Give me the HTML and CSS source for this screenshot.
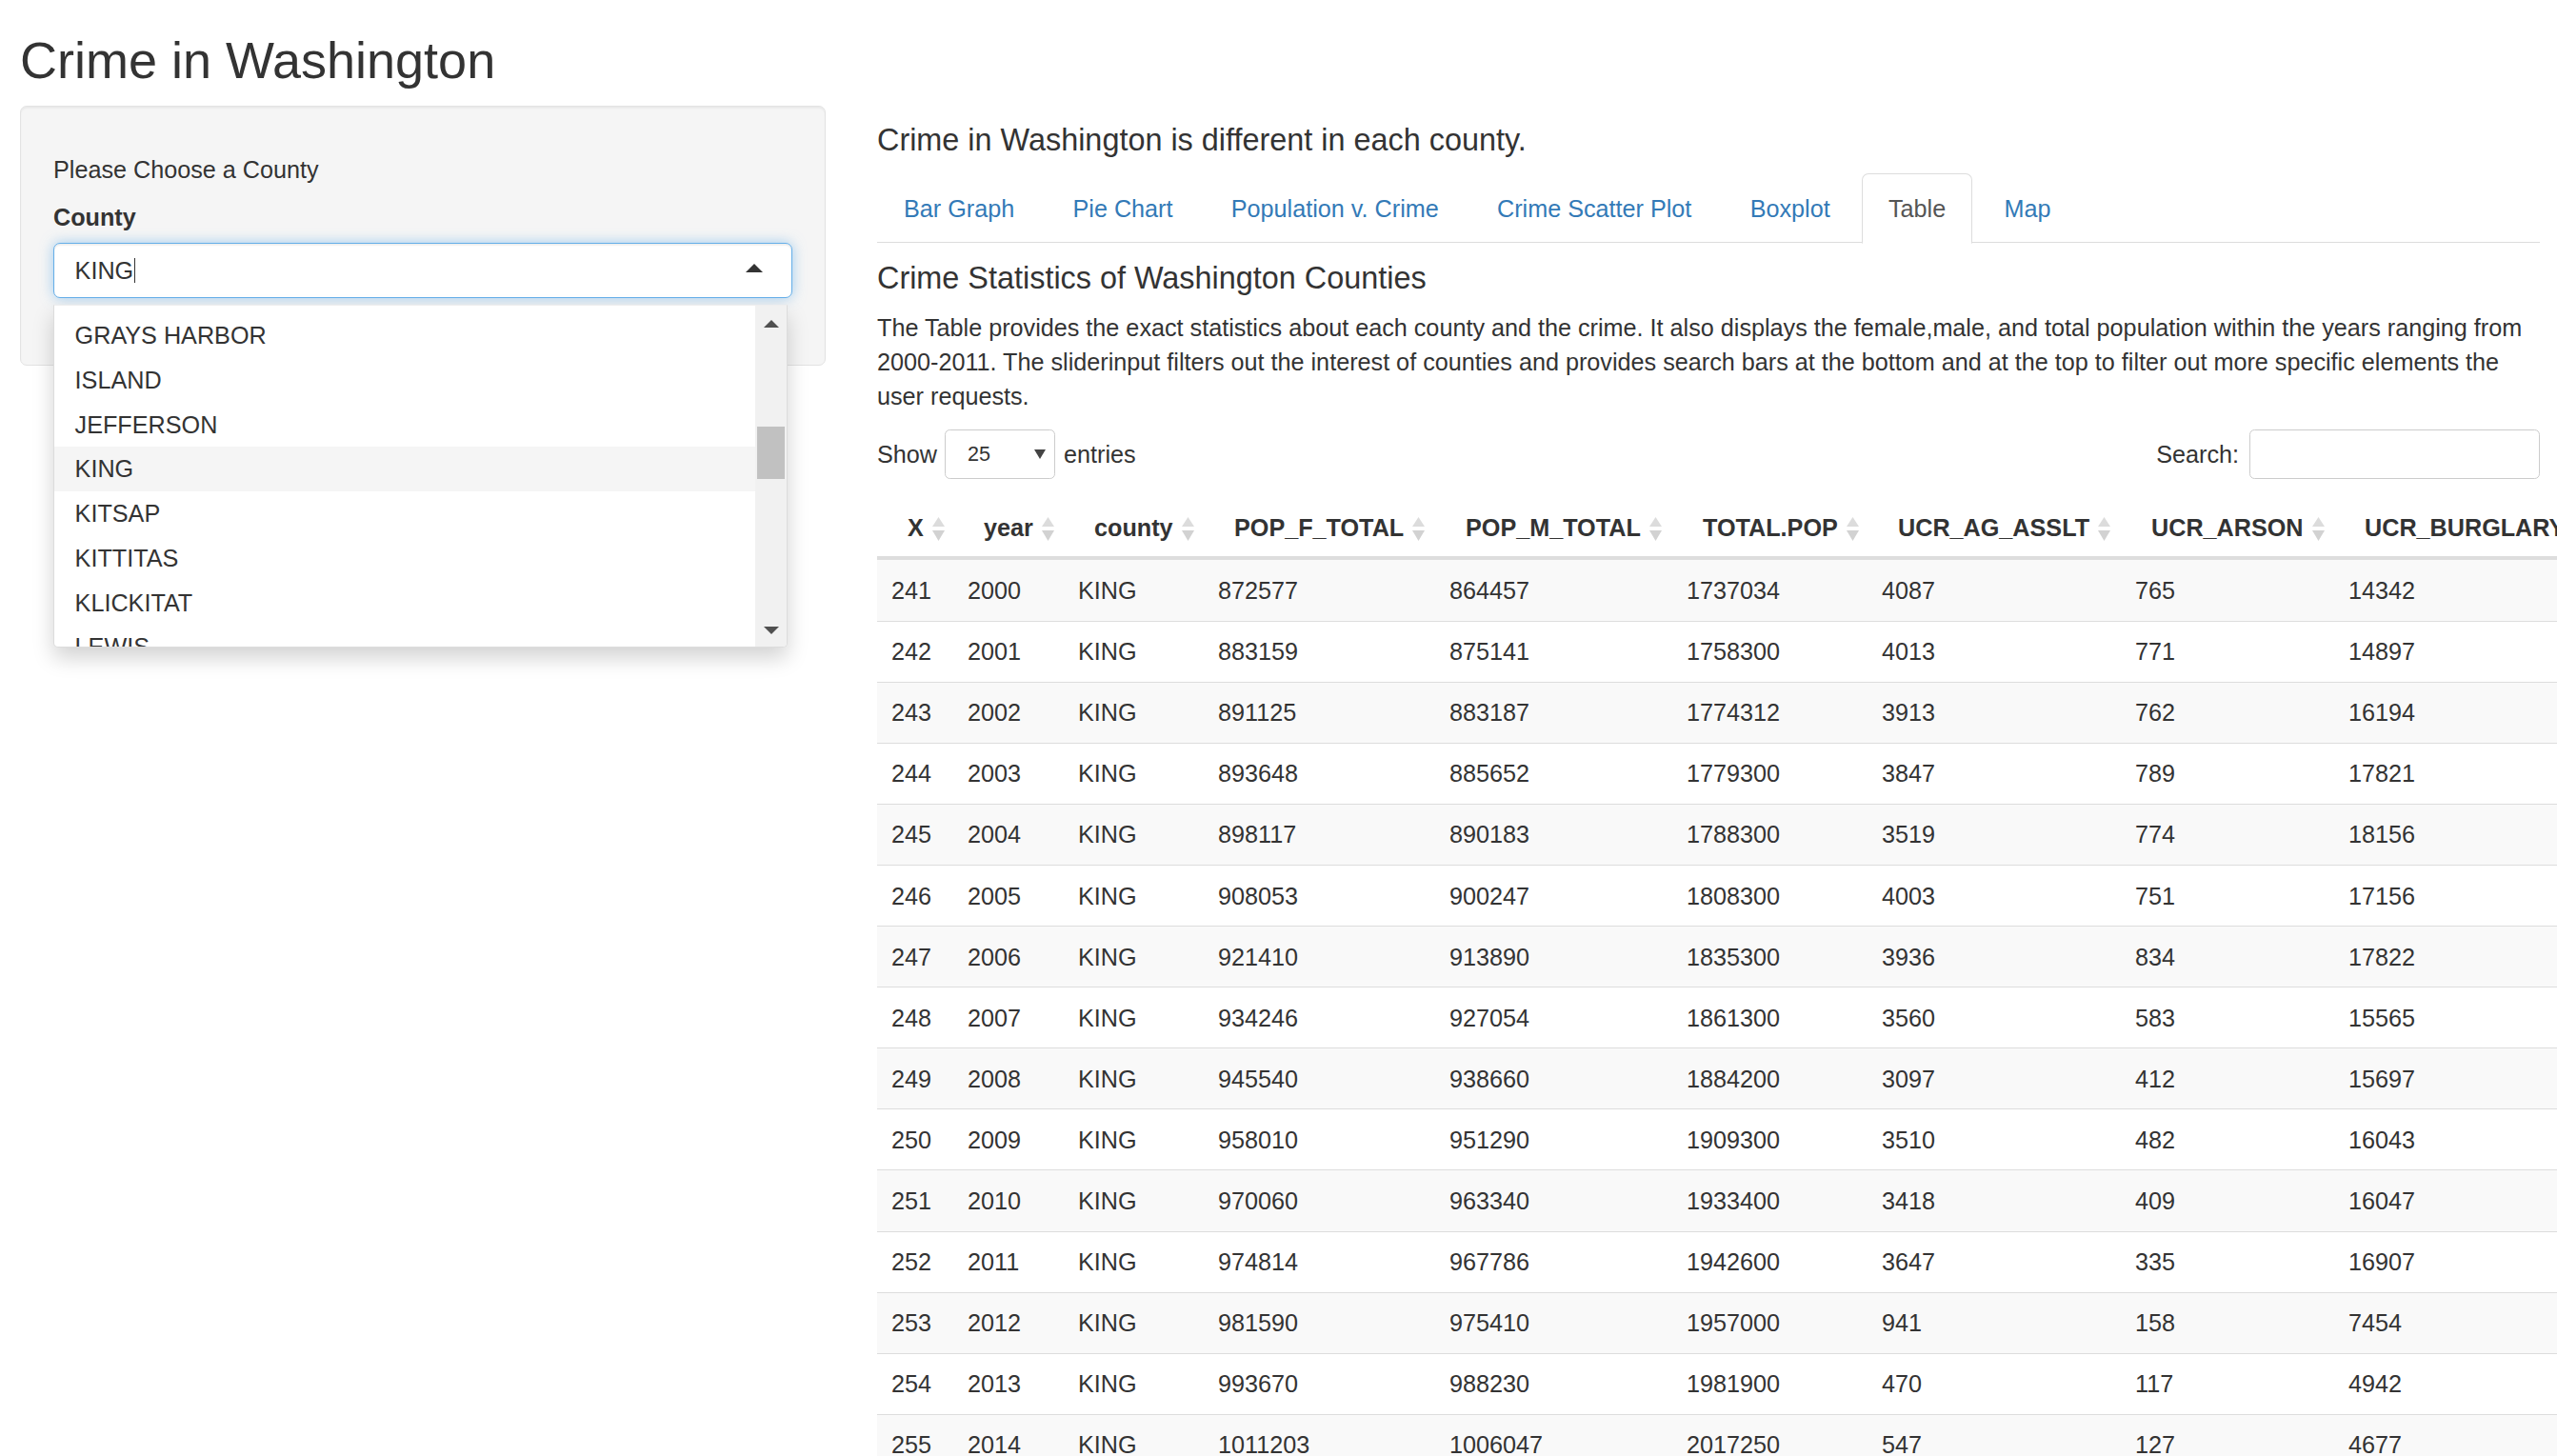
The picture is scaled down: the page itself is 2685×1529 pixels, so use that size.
FILE: index.html
```html
<!DOCTYPE html>
<html lang="en">
<head>
<meta charset="utf-8">
<title>Crime in Washington</title>
<link rel="stylesheet" href="styles.css">
</head>
<body>
<div class="page">
  <h1 class="title">Crime in Washington</h1>
  <div class="layout">
    <aside class="sidebar">
      <div class="well">
        <h5 class="well-heading">Please Choose a County</h5>
        <label class="field-label">County</label>
        <div class="select-group">
          <div class="select-input">
            <div class="select-value"><span>KING</span><span class="cursor"></span></div>
            <svg class="caret" width="18" height="9" viewBox="0 0 18 9"><path d="M0 9 L9 0 L18 9 Z" fill="#333"/></svg>
          </div>
          <div class="dropdown">
            <div class="options">
              <div class="option">GRAYS HARBOR</div>
              <div class="option">ISLAND</div>
              <div class="option">JEFFERSON</div>
              <div class="option active">KING</div>
              <div class="option">KITSAP</div>
              <div class="option">KITTITAS</div>
              <div class="option">KLICKITAT</div>
              <div class="option">LEWIS</div>
            </div>
            <div class="scrollbar">
              <div class="sb-btn sb-up"><svg width="16" height="8" viewBox="0 0 16 8"><path d="M0 8 L8 0 L16 8 Z" fill="#505050"/></svg></div>
              <div class="sb-track"><div class="sb-thumb"></div></div>
              <div class="sb-btn sb-down"><svg width="16" height="8" viewBox="0 0 16 8"><path d="M0 0 L16 0 L8 8 Z" fill="#505050"/></svg></div>
            </div>
          </div>
        </div>
      </div>
    </aside>
    <main class="main">
      <h4 class="intro">Crime in Washington is different in each county.</h4>
      <ul class="tabs">
        <li class="tab"><a href="#">Bar Graph</a></li>
        <li class="tab"><a href="#">Pie Chart</a></li>
        <li class="tab"><a href="#">Population v. Crime</a></li>
        <li class="tab"><a href="#">Crime Scatter Plot</a></li>
        <li class="tab"><a href="#">Boxplot</a></li>
        <li class="tab active"><a href="#">Table</a></li>
        <li class="tab"><a href="#">Map</a></li>
      </ul>
      <div class="tab-content">
        <h4 class="section-title">Crime Statistics of Washington Counties</h4>
        <p class="desc">The Table provides the exact statistics about each county and the crime. It also displays the female,male, and total population within the years ranging from 2000-2011. The sliderinput filters out the interest of counties and provides search bars at the bottom and at the top to filter out more specific elements the user requests.</p>
        <div class="dt-controls">
          <div class="dt-length">
            <span>Show</span>
            <div class="fake-select"><span>25</span><svg width="12" height="10" viewBox="0 0 12 10"><path d="M0 0 L12 0 L6 10 Z" fill="#444"/></svg></div>
            <span>entries</span>
          </div>
          <div class="dt-search">
            <span>Search:</span>
            <div class="search-box"></div>
          </div>
        </div>
        <table class="dt">
          <colgroup>
            <col class="w1"><col class="w2"><col class="w3"><col class="w4"><col class="w5"><col class="w6"><col class="w7"><col class="w8"><col class="w9">
          </colgroup>
          <thead>
            <tr>
              <th>X<svg class="sort" width="15" height="25" viewBox="0 0 15 25"><path d="M7.5 0 L14 10 L1 10 Z" fill="#dcdcdc"/><path d="M1 14 L14 14 L7.5 25 Z" fill="#d2d2d2"/></svg></th>
              <th>year<svg class="sort" width="15" height="25" viewBox="0 0 15 25"><path d="M7.5 0 L14 10 L1 10 Z" fill="#dcdcdc"/><path d="M1 14 L14 14 L7.5 25 Z" fill="#d2d2d2"/></svg></th>
              <th>county<svg class="sort" width="15" height="25" viewBox="0 0 15 25"><path d="M7.5 0 L14 10 L1 10 Z" fill="#dcdcdc"/><path d="M1 14 L14 14 L7.5 25 Z" fill="#d2d2d2"/></svg></th>
              <th>POP_F_TOTAL<svg class="sort" width="15" height="25" viewBox="0 0 15 25"><path d="M7.5 0 L14 10 L1 10 Z" fill="#dcdcdc"/><path d="M1 14 L14 14 L7.5 25 Z" fill="#d2d2d2"/></svg></th>
              <th>POP_M_TOTAL<svg class="sort" width="15" height="25" viewBox="0 0 15 25"><path d="M7.5 0 L14 10 L1 10 Z" fill="#dcdcdc"/><path d="M1 14 L14 14 L7.5 25 Z" fill="#d2d2d2"/></svg></th>
              <th>TOTAL.POP<svg class="sort" width="15" height="25" viewBox="0 0 15 25"><path d="M7.5 0 L14 10 L1 10 Z" fill="#dcdcdc"/><path d="M1 14 L14 14 L7.5 25 Z" fill="#d2d2d2"/></svg></th>
              <th>UCR_AG_ASSLT<svg class="sort" width="15" height="25" viewBox="0 0 15 25"><path d="M7.5 0 L14 10 L1 10 Z" fill="#dcdcdc"/><path d="M1 14 L14 14 L7.5 25 Z" fill="#d2d2d2"/></svg></th>
              <th>UCR_ARSON<svg class="sort" width="15" height="25" viewBox="0 0 15 25"><path d="M7.5 0 L14 10 L1 10 Z" fill="#dcdcdc"/><path d="M1 14 L14 14 L7.5 25 Z" fill="#d2d2d2"/></svg></th>
              <th>UCR_BURGLARY</th>
            </tr>
          </thead>
          <tbody>
            <tr><td>241</td><td>2000</td><td>KING</td><td>872577</td><td>864457</td><td>1737034</td><td>4087</td><td>765</td><td>14342</td></tr>
            <tr><td>242</td><td>2001</td><td>KING</td><td>883159</td><td>875141</td><td>1758300</td><td>4013</td><td>771</td><td>14897</td></tr>
            <tr><td>243</td><td>2002</td><td>KING</td><td>891125</td><td>883187</td><td>1774312</td><td>3913</td><td>762</td><td>16194</td></tr>
            <tr><td>244</td><td>2003</td><td>KING</td><td>893648</td><td>885652</td><td>1779300</td><td>3847</td><td>789</td><td>17821</td></tr>
            <tr><td>245</td><td>2004</td><td>KING</td><td>898117</td><td>890183</td><td>1788300</td><td>3519</td><td>774</td><td>18156</td></tr>
            <tr><td>246</td><td>2005</td><td>KING</td><td>908053</td><td>900247</td><td>1808300</td><td>4003</td><td>751</td><td>17156</td></tr>
            <tr><td>247</td><td>2006</td><td>KING</td><td>921410</td><td>913890</td><td>1835300</td><td>3936</td><td>834</td><td>17822</td></tr>
            <tr><td>248</td><td>2007</td><td>KING</td><td>934246</td><td>927054</td><td>1861300</td><td>3560</td><td>583</td><td>15565</td></tr>
            <tr><td>249</td><td>2008</td><td>KING</td><td>945540</td><td>938660</td><td>1884200</td><td>3097</td><td>412</td><td>15697</td></tr>
            <tr><td>250</td><td>2009</td><td>KING</td><td>958010</td><td>951290</td><td>1909300</td><td>3510</td><td>482</td><td>16043</td></tr>
            <tr><td>251</td><td>2010</td><td>KING</td><td>970060</td><td>963340</td><td>1933400</td><td>3418</td><td>409</td><td>16047</td></tr>
            <tr><td>252</td><td>2011</td><td>KING</td><td>974814</td><td>967786</td><td>1942600</td><td>3647</td><td>335</td><td>16907</td></tr>
            <tr><td>253</td><td>2012</td><td>KING</td><td>981590</td><td>975410</td><td>1957000</td><td>941</td><td>158</td><td>7454</td></tr>
            <tr><td>254</td><td>2013</td><td>KING</td><td>993670</td><td>988230</td><td>1981900</td><td>470</td><td>117</td><td>4942</td></tr>
            <tr><td>255</td><td>2014</td><td>KING</td><td>1011203</td><td>1006047</td><td>2017250</td><td>547</td><td>127</td><td>4677</td></tr>
          </tbody>
        </table>
      </div>
    </main>
  </div>
</div>
</body>
</html>
```
FILE: styles.css
```css
html, body {
  margin: 0;
  padding: 0;
  overflow: hidden;
  background: #fff;
}
body {
  font-family: "Liberation Sans", Arial, Helvetica, sans-serif;
  font-size: 25.2px;
  line-height: 36px;
  color: #333;
  width: 2685px;
  height: 1529px;
}
.page {
  padding: 0 18px 0 21px;
}
.title {
  font-size: 54px;
  font-weight: 400;
  line-height: 59.4px;
  margin: 34px 0 18px;
}
.layout {
  display: flex;
  gap: 54px;
  align-items: flex-start;
}
.sidebar {
  flex: none;
  width: 846px;
}
.well {
  background: #f5f5f5;
  border: 1.8px solid #e3e3e3;
  border-radius: 7px;
  padding: 34px;
  box-shadow: inset 0 1.8px 1.8px rgba(0, 0, 0, 0.05);
}
.well-heading {
  font-size: 25.2px;
  font-weight: 400;
  line-height: 27.7px;
  margin: 18.5px 0 17px;
}
.field-label {
  display: block;
  font-weight: 700;
  margin-bottom: 9px;
}
.select-group {
  position: relative;
  margin-bottom: 36px;
}
.select-input {
  height: 58px;
  box-sizing: border-box;
  border: 1.8px solid #66afe9;
  border-radius: 7px;
  background: #fff;
  display: flex;
  align-items: center;
  padding: 0 30px 0 21.6px;
  box-shadow: inset 0 1.8px 1.8px rgba(0, 0, 0, 0.075), 0 0 14px rgba(102, 175, 233, 0.6);
}
.select-value {
  flex: 1;
  display: flex;
  align-items: center;
}
.cursor {
  width: 1.6px;
  height: 26px;
  background: #333;
  margin-left: 0.5px;
}
.caret {
  display: block;
  margin-top: -4px;
}
.dropdown {
  position: absolute;
  top: calc(100% + 7px);
  left: 0;
  width: 771px;
  height: 360px;
  box-sizing: border-box;
  background: #fff;
  border: 1px solid #dcdcdc;
  border-top-color: #eeeeee;
  border-radius: 0 0 5px 5px;
  box-shadow: 0 11px 22px rgba(0, 0, 0, 0.175);
  display: flex;
  overflow: hidden;
  z-index: 10;
}
.options {
  flex: 1;
  padding-top: 8px;
  overflow: hidden;
}
.option {
  padding: 5.4px 21.6px;
  line-height: 36px;
  white-space: nowrap;
}
.option.active {
  background: #f5f5f5;
}
.scrollbar {
  flex: none;
  width: 33px;
  background: #f1f1f1;
  display: flex;
  flex-direction: column;
}
.sb-btn {
  display: flex;
  align-items: center;
  justify-content: center;
}
.sb-up {
  height: 38px;
}
.sb-down {
  height: 34px;
}
.sb-btn svg {
  display: block;
}
.sb-track {
  flex: 1;
  padding: 0 2px;
}
.sb-thumb {
  margin-top: 89px;
  height: 55px;
  background: #c1c1c1;
}
.main {
  flex: none;
  width: 1746px;
}
.intro {
  font-size: 32.4px;
  font-weight: 400;
  line-height: 35.6px;
  margin: 18.5px 0 16.5px;
}
.tabs {
  display: flex;
  list-style: none;
  margin: 0;
  padding: 0;
  border-bottom: 1.8px solid #ddd;
}
.tab {
  margin-bottom: -1.8px;
}
.tab a {
  display: block;
  padding: 18px 27px;
  margin-right: 5.3px;
  line-height: 36px;
  border: 1.8px solid transparent;
  border-radius: 7px 7px 0 0;
  color: #337ab7;
  text-decoration: none;
}
.tab.active a {
  color: #555;
  background: #fff;
  border-color: #ddd;
  border-bottom-color: transparent;
}
.section-title {
  font-size: 32.4px;
  font-weight: 400;
  line-height: 35.6px;
  margin: 20px 0 15px;
}
.desc {
  margin: 0 0 17px;
}
.dt-controls {
  display: flex;
  justify-content: space-between;
  align-items: center;
  height: 52px;
}
.dt-length {
  display: flex;
  align-items: center;
}
.fake-select {
  width: 116px;
  height: 52px;
  box-sizing: border-box;
  border: 1.8px solid #ccc;
  border-radius: 5.4px;
  margin: 0 9px 0 8px;
  display: flex;
  align-items: center;
  justify-content: space-between;
  padding: 0 9px 0 23px;
  font-size: 21.6px;
  background: #fff;
}
.fake-select svg {
  display: block;
}
.dt-search {
  display: flex;
  align-items: center;
}
.search-box {
  width: 305px;
  height: 52px;
  box-sizing: border-box;
  border: 1.8px solid #ccc;
  border-radius: 5.4px;
  margin-left: 11px;
  background: #fff;
}
.dt {
  border-collapse: separate;
  border-spacing: 0;
  margin-top: 19px;
  table-layout: fixed;
  width: 1839px;
}
.w1 { width: 80px; }
.w2 { width: 116px; }
.w3 { width: 147px; }
.w4 { width: 243px; }
.w5 { width: 249px; }
.w6 { width: 205px; }
.w7 { width: 266px; }
.w8 { width: 224px; }
.w9 { width: 309px; }
.dt th {
  text-align: left;
  font-weight: 700;
  padding: 14.4px 0 12.3px 32px;
  line-height: 36px;
  border-bottom: 3.6px solid #ddd;
  white-space: nowrap;
  overflow: hidden;
}
.sort {
  margin-left: 8px;
  vertical-align: -5px;
}
.dt td {
  padding: 13.55px 8px 13.55px 15px;
  line-height: 36px;
  border-top: 1px solid #ddd;
  white-space: nowrap;
}
.dt tbody tr:nth-child(odd) td {
  background: #f9f9f9;
}
```
